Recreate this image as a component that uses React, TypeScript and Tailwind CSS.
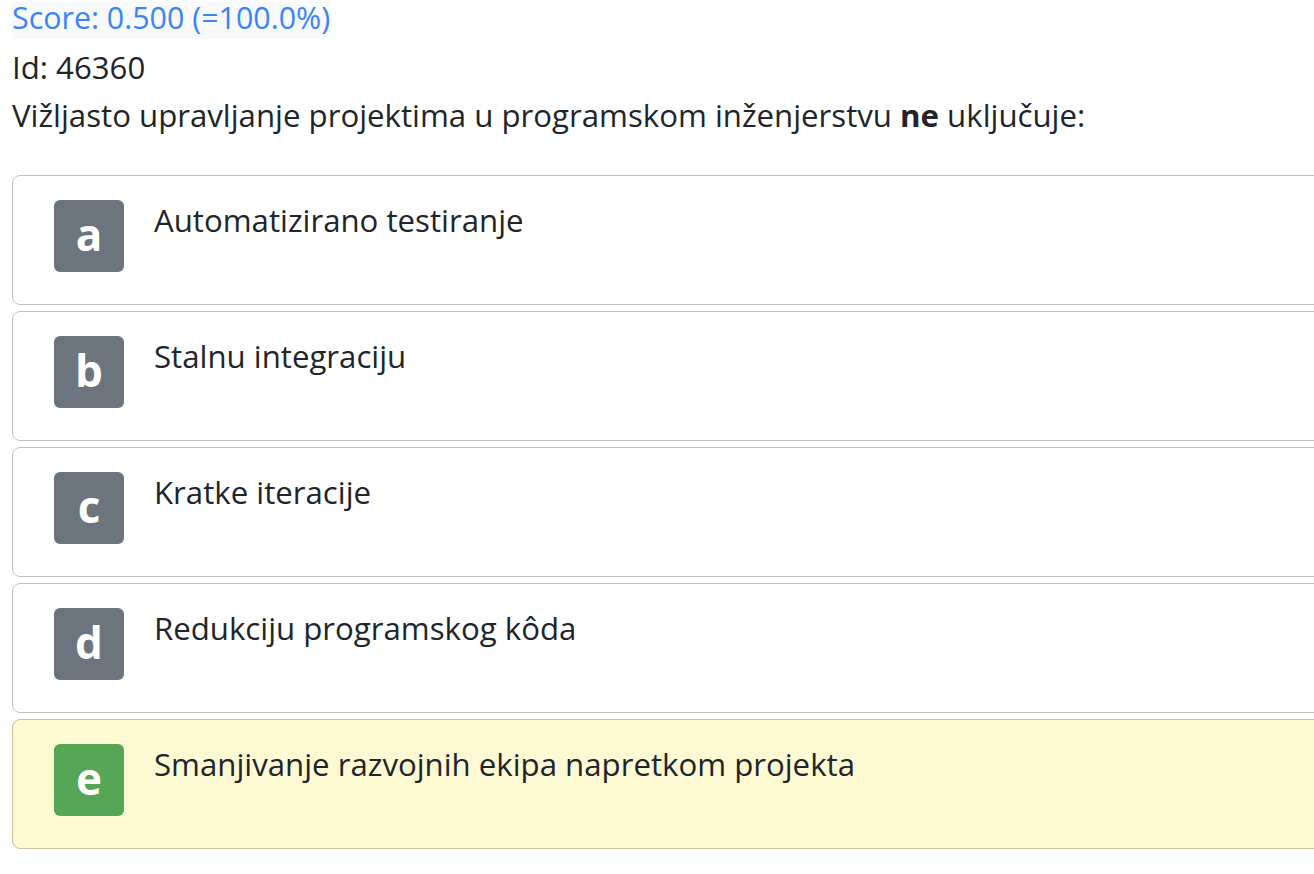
const answers = [
  { letter: 'a', text: 'Automatizirano testiranje', correct: false },
  { letter: 'b', text: 'Stalnu integraciju', correct: false },
  { letter: 'c', text: 'Kratke iteracije', correct: false },
  { letter: 'd', text: 'Redukciju programskog kôda', correct: false },
  { letter: 'e', text: 'Smanjivanje razvojnih ekipa napretkom projekta', correct: true },
];

export default function App() {
  return (
    <div className="w-[1314px] h-[874px] overflow-hidden bg-white text-[#212529] font-['Open_Sans',sans-serif]">
      <div className="flex flex-col items-start pl-3 w-[1360px]">
        <div className="mt-[2px] h-[37px] leading-[31px] text-[30.4px] bg-[#f8f9fa] text-[#3b84f6] whitespace-nowrap">
          Score: 0.500 (=100.0%)
        </div>
        <div className="mt-[4px] text-[31.2px] leading-[48px]">Id: 46360</div>
        <div className="text-[31.2px] leading-[48px] whitespace-nowrap">
          Vižljasto upravljanje projektima u programskom inženjerstvu <b className="font-bold">ne</b> uključuje:
        </div>
        <div className="mt-[36px] flex flex-col gap-[6px] self-stretch">
          {answers.map((a) => (
            <div
              key={a.letter}
              className={
                a.correct
                  ? 'h-[130px] rounded-[8px] border border-[#c9c29c] bg-[#fdf9d3] flex items-start pl-[41px] pt-[20px] gap-[30px]'
                  : 'h-[130px] rounded-[8px] border border-[#c2c2c2] bg-white flex items-start pl-[41px] pt-[20px] gap-[30px]'
              }
            >
              <div
                className={
                  a.correct
                    ? 'mt-[4px] w-[70px] h-[72px] rounded-[6px] bg-[#55a655] text-white font-bold text-[44px] flex items-center justify-center leading-none pb-[4px]'
                    : 'mt-[4px] w-[70px] h-[72px] rounded-[6px] bg-[#6c757d] text-white font-bold text-[44px] flex items-center justify-center leading-none pb-[4px]'
                }
              >
                {a.letter}
              </div>
              <div className="text-[31.2px] leading-[48px] whitespace-nowrap">{a.text}</div>
            </div>
          ))}
        </div>
      </div>
    </div>
  );
}
